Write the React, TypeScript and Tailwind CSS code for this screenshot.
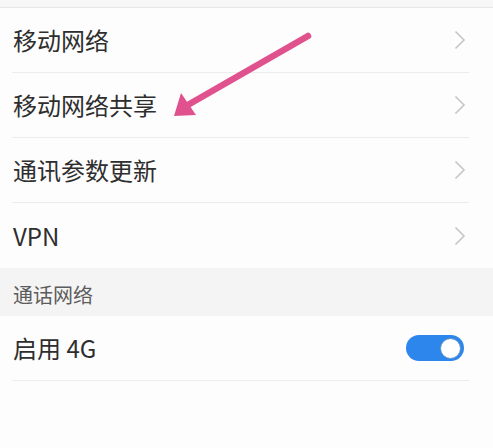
type Row = { label: string; chevron?: boolean; divider?: boolean };

const netRows: Row[] = [
  { label: "移动网络", chevron: true, divider: true },
  { label: "移动网络共享", chevron: true, divider: true },
  { label: "通讯参数更新", chevron: true, divider: true },
  { label: "VPN", chevron: true },
];

function Chevron() {
  return (
    <svg width="12" height="20" viewBox="0 0 12 20" className="mr-[3px]">
      <polyline points="1.5,1.5 10,10 1.5,18.5" fill="none" stroke="#c6c6c6" strokeWidth="1.6" />
    </svg>
  );
}

function Toggle() {
  return (
    <div className="mr-[5px] w-[58px] h-[26px] rounded-full bg-[#2d86ec] flex items-center justify-end pr-[3px]">
      <div className="w-[21px] h-[21px] rounded-full bg-white border border-[#5a8fc8]" />
    </div>
  );
}

function SettingRow({ label, chevron, divider, right }: Row & { right?: React.ReactNode }) {
  return (
    <div className="pl-[12px] pr-[24px] bg-[#fdfdfd]">
      <div
        className={
          "h-[65px] flex items-center justify-between " +
          (divider ? "border-b border-[#ececec]" : "")
        }
      >
        <span className="text-[24px] text-[#2e2e2e] pl-[1px]">{label}</span>
        {chevron && <Chevron />}
        {right}
      </div>
    </div>
  );
}

export default function App() {
  return (
    <div
      className="relative w-[493px] h-[448px] bg-[#fdfdfd] overflow-hidden"
      style={{ fontFamily: '"Noto Sans CJK SC", "Noto Sans", sans-serif' }}
    >
      <div className="h-[9px] bg-[#f7f7f7] border-b-2 border-[#e6e6e6]" />
      <div className="-mt-px">
        {netRows.map((r) => (
          <SettingRow key={r.label} {...r} />
        ))}
      </div>

      <div className="h-[48px] bg-[#f4f4f4] flex items-center pl-[13px] pt-[6px]">
        <span className="text-[20px] text-[#5c5c5c]">通话网络</span>
      </div>

      <SettingRow label="启用 4G" divider right={<Toggle />} />

      {/* annotation arrow */}
      <svg className="absolute left-0 top-0" width="493" height="448" viewBox="0 0 493 448">
        <line x1="308" y1="36" x2="186" y2="106" stroke="#e0528e" strokeWidth="6.5" strokeLinecap="round" />
        <polygon points="174,116 181,93 196,115" fill="#e0528e" />
      </svg>
    </div>
  );
}
